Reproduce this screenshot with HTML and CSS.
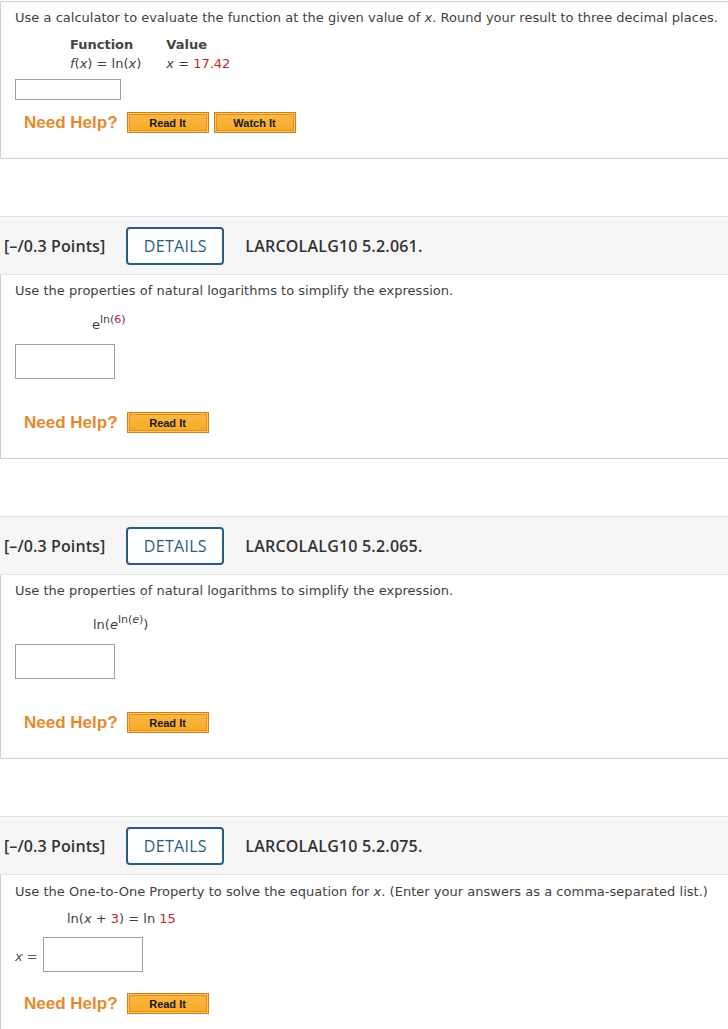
FILE: index.html
```html
<!DOCTYPE html>
<html>
<head>
<meta charset="utf-8">
<link rel="stylesheet" href="styles.css">
</head>
<body>
<div class="card card-first">
  <p class="q">Use a calculator to evaluate the function at the given value of <i>x</i>. Round your result to three decimal places.</p>
  <table class="fv">
    <tr><th>Function</th><th>Value</th></tr>
    <tr><td><i>f</i>(<i>x</i>) = ln(<i>x</i>)</td><td><i>x</i> = <span class="red">17.42</span></td></tr>
  </table>
  <div class="input small"></div>
  <div class="help">
    <span class="need">Need Help?</span>
    <span class="btn">Read It</span>
    <span class="btn">Watch It</span>
  </div>
</div>

<div class="header">
  <span class="pts">[–/0.3 Points]</span>
  <span class="details">DETAILS</span>
  <span class="code">LARCOLALG10 5.2.061.</span>
</div>
<div class="card">
  <p class="q">Use the properties of natural logarithms to simplify the expression.</p>
  <div class="expr expr1">e<sup>ln(<span class="red">6</span>)</sup></div>
  <div class="input big"></div>
  <div class="help help2">
    <span class="need">Need Help?</span>
    <span class="btn">Read It</span>
  </div>
</div>

<div class="header">
  <span class="pts">[–/0.3 Points]</span>
  <span class="details">DETAILS</span>
  <span class="code">LARCOLALG10 5.2.065.</span>
</div>
<div class="card">
  <p class="q">Use the properties of natural logarithms to simplify the expression.</p>
  <div class="expr expr2">ln(<i>e</i><sup>ln(<i>e</i>)</sup>)</div>
  <div class="input big"></div>
  <div class="help help2">
    <span class="need">Need Help?</span>
    <span class="btn">Read It</span>
  </div>
</div>

<div class="header">
  <span class="pts">[–/0.3 Points]</span>
  <span class="details">DETAILS</span>
  <span class="code">LARCOLALG10 5.2.075.</span>
</div>
<div class="card card-last">
  <p class="q">Use the One-to-One Property to solve the equation for <i>x</i>. (Enter your answers as a comma-separated list.)</p>
  <div class="expr expr3">ln(<i>x</i> + <span class="red">3</span>) = ln <span class="red">15</span></div>
  <div class="answer-row"><span class="xeq"><i>x</i> =</span><div class="input big"></div></div>
  <div class="help help3">
    <span class="need">Need Help?</span>
    <span class="btn">Read It</span>
  </div>
</div>
</body>
</html>
```

FILE: styles.css
```css
html, body {
  margin: 0;
  padding: 0;
  background: #fff;
  overflow: hidden;
}
body {
  font-family: "DejaVu Sans", Verdana, sans-serif;
  font-size: 13px;
  color: #3f3f3f;
}
.card {
  border: 1px solid #cfcfcf;
  border-top: none;
  border-right: none;
  padding: 7px 0 0 14px;
  box-sizing: border-box;
  height: 184px;
}
.card-first {
  margin-top: 1px;
  border-top: 1px solid #cfcfcf;
  height: 158px;
  padding-top: 7px;
}
.card-last {
  height: 160px;
  padding-top: 8px;
}
.q {
  margin: 0;
  line-height: 17px;
  font-size: 13px;
  letter-spacing: 0.02px;
}
.red { color: #c1272d; }
.fv {
  border-collapse: collapse;
  margin: 9px 0 0 54px;
}
.fv th, .fv td {
  padding: 0 24px 0 1px;
  text-align: left;
  line-height: 19px;
  font-size: 13px;
}
.fv th { font-weight: bold; color: #444; }
.input {
  border: 1px solid #a0a0a0;
  background: #fff;
  box-sizing: border-box;
}
.input.small {
  width: 106px;
  height: 21px;
  margin-top: 6px;
}
.input.big {
  width: 100px;
  height: 35px;
}
.help {
  display: flex;
  align-items: center;
  margin-top: 12px;
  margin-left: 9px;
}
.need {
  font-family: "Liberation Sans", Arial, sans-serif;
  font-weight: bold;
  font-size: 17px;
  color: #e58a2c;
  margin-right: 9px;
}
.btn {
  font-family: "Liberation Sans", Arial, sans-serif;
  font-weight: bold;
  font-size: 11px;
  color: #1a1a1a;
  width: 82px;
  height: 21px;
  box-sizing: border-box;
  display: flex;
  align-items: center;
  justify-content: center;
  background: linear-gradient(#fbb944, #f7a928);
  border: 1px solid #d17f1e;
  box-shadow: inset 0 0 0 1px #fcc666, inset 0 0 0 2px #e0921f;
  margin-right: 5px;
}
.header {
  margin-top: 57px;
  height: 59px;
  background: #f6f6f6;
  border-top: 1px solid #e2e2e2;
  border-bottom: 1px solid #e4e4e4;
  box-sizing: border-box;
  display: flex;
  align-items: center;
  font-family: "Open Sans", sans-serif;
  font-weight: 600;
  font-size: 16px;
  letter-spacing: 0.2px;
  color: #333;
}
.pts { margin-left: 4px; letter-spacing: 0.1px; }
.details {
  margin-left: 21px;
  width: 98px;
  height: 38px;
  box-sizing: border-box;
  border: 2px solid #2b5b84;
  border-radius: 4px;
  color: #2b5b84;
  font-weight: 400;
  letter-spacing: 0.3px;
  display: flex;
  align-items: center;
  justify-content: center;
  background: #fff;
}
.code { margin-left: 21px; }
.expr {
  line-height: 17px;
  font-size: 13px;
}
.expr sup {
  font-size: 11px;
  vertical-align: 6px;
  line-height: 0;
}
.expr1 { margin: 17px 0 0 77px; }
.expr2 { margin: 17px 0 0 78px; }
.expr3 { margin: 10px 0 0 52px; }
.card .input.big { margin-top: 11px; }
.help2 { margin-top: 33px; }
.answer-row {
  display: flex;
  align-items: center;
  margin-top: 10px;
}
.answer-row .input.big { margin-top: 0; margin-left: 5px; }
.xeq { color: #555; padding-top: 4px; }
.help3 { margin-top: 21px; }
```
